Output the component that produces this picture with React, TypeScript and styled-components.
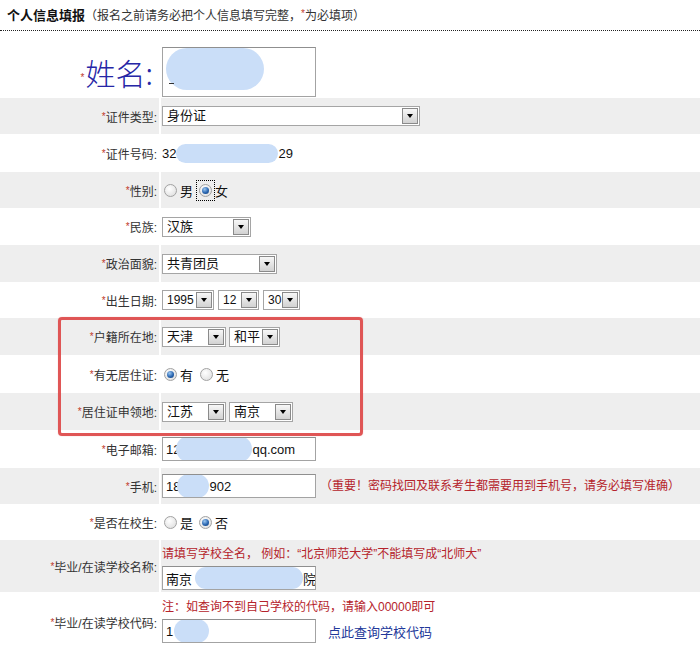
import React from "react";
import styled, { createGlobalStyle } from "styled-components";

const Global = createGlobalStyle`
  html, body { margin: 0; padding: 0; background: #fff; }
  body {
    font-family: "Liberation Sans", "Noto Sans CJK SC", sans-serif;
    font-size: 12px;
    color: #222;
  }
`;

const Page = styled.div`
  width: 700px;
  height: 647px;
  overflow: hidden;
  background: #fff;
`;

const Header = styled.div`
  height: 31px;
  box-sizing: border-box;
  padding: 5px 0 0 7px;
  border-bottom: 1px dotted #222;
  line-height: 18px;
  font-size: 12px;
  color: #333;
  white-space: nowrap;
`;

const HeaderTitle = styled.span`
  font-weight: bold;
  font-size: 13px;
  color: #111;
`;

const Star = styled.span`
  color: #c0392b;
  font-size: 10px;
  vertical-align: 3px;
`;

const Row = styled.div<{ $h: number; $alt?: boolean }>`
  display: grid;
  grid-template-columns: 159px 1fr;
  column-gap: 2px;
  height: ${(p) => p.$h}px;
  & > * {
    background: ${(p) => (p.$alt ? "#eeeeee" : "#fff")};
  }
`;

const LabelCell = styled.div<{ $top?: number }>`
  display: flex;
  justify-content: flex-end;
  align-items: center;
  padding-right: 2px;
  padding-top: ${(p) => p.$top ?? 0}px;
  font-size: 12px;
  color: #333;
  white-space: nowrap;
`;

const BigLabel = styled.span`
  font-family: "Noto Sans CJK SC", sans-serif;
  font-weight: 300;
  font-size: 30px;
  color: #2626a6;
  margin-right: 4px;
  line-height: 1;
`;

const BigStar = styled.span`
  color: #c0392b;
  font-size: 10px;
  align-self: center;
  margin-top: 12px;
  margin-right: 1px;
`;

const FieldCell = styled.div`
  display: flex;
  align-items: center;
  padding-left: 1px;
  font-size: 13px;
  color: #111;
  white-space: nowrap;
`;

const NameField = styled(FieldCell)`
  align-items: flex-end;
  padding-bottom: 1px;
`;

const StackField = styled.div<{ $top: number }>`
  display: flex;
  flex-direction: column;
  align-items: flex-start;
  padding: ${(p) => p.$top}px 0 0 1px;
  gap: 4px;
  white-space: nowrap;
`;

const InlineGroup = styled.div`
  display: flex;
  align-items: center;
`;

const Note = styled.span<{ $ml?: number }>`
  color: #b5232b;
  font-size: 12px;
  line-height: 16px;
  margin-left: ${(p) => p.$ml ?? 0}px;
`;

const Link = styled.span`
  color: #22389a;
  font-size: 13px;
  margin-left: 12px;
`;

const Plain = styled.span`
  font-size: 13px;
  color: #111;
`;

const Blur = styled.span<{ $w: number; $h: number; $ml?: number }>`
  display: inline-block;
  flex-shrink: 0;
  width: ${(p) => p.$w}px;
  height: ${(p) => p.$h}px;
  margin-left: ${(p) => p.$ml ?? 0}px;
  background: #cadef8;
  border-radius: 999px;
`;

const InputBox = styled.div<{ $h?: number; $top?: boolean }>`
  display: flex;
  align-items: ${(p) => (p.$top ? "flex-start" : "center")};
  box-sizing: border-box;
  width: 154px;
  height: ${(p) => p.$h ?? 24}px;
  border: 1px solid #a3a3a3;
  border-top-color: #8f8f8f;
  background: #fff;
  padding-left: 3px;
  font-size: 13px;
  color: #111;
  overflow: hidden;
  white-space: nowrap;
`;

const Caret = styled.span`
  position: relative;
  width: 0;
  height: 100%;
  &::before {
    content: "";
    position: absolute;
    left: 3px;
    bottom: 12px;
    width: 5px;
    height: 1px;
    background: #333;
  }
`;

const SelectBox = styled.div<{ $w: number; $num?: boolean; $gap?: number }>`
  display: inline-flex;
  align-items: center;
  box-sizing: border-box;
  width: ${(p) => p.$w}px;
  height: 20px;
  margin-left: ${(p) => p.$gap ?? 0}px;
  border: 1px solid #a5a5a5;
  background: #fff;
  padding: 1px;
  font-size: ${(p) => (p.$num ? 12 : 13)}px;
  color: #111;
`;

const SelectValue = styled.span`
  flex: 1;
  padding-left: 3px;
  line-height: 16px;
  white-space: nowrap;
  overflow: hidden;
`;

const SelectButton = styled.span`
  width: 16px;
  height: 16px;
  flex-shrink: 0;
  box-sizing: border-box;
  border: 1px solid #8a8a8a;
  background: linear-gradient(#f7f7f7, #d2d2d2);
  display: flex;
  align-items: center;
  justify-content: center;
  &::before {
    content: "";
    border-left: 3.5px solid transparent;
    border-right: 3.5px solid transparent;
    border-top: 4px solid #000;
  }
`;

const RadioDot = styled.span<{ $on?: boolean }>`
  width: 13px;
  height: 13px;
  border-radius: 50%;
  box-sizing: border-box;
  border: 1px solid #a2a2a2;
  background: radial-gradient(circle at 40% 35%, #ffffff, #dadada);
  display: inline-flex;
  align-items: center;
  justify-content: center;
  flex-shrink: 0;
  &::after {
    content: "";
    width: 7px;
    height: 7px;
    border-radius: 50%;
    background: radial-gradient(circle at 38% 32%, #9cc8f2, #2a66b0 55%, #0b3570);
    display: ${(p) => (p.$on ? "block" : "none")};
  }
`;

const RadioOption = styled.span<{ $gap?: number }>`
  display: inline-flex;
  align-items: center;
  margin-left: ${(p) => p.$gap ?? 3}px;
  font-size: 13px;
  color: #111;
`;

const Focus = styled.span<{ $focus?: boolean }>`
  display: inline-flex;
  align-items: center;
  padding: 3px 2px;
  outline: ${(p) => (p.$focus ? "1px dotted #000" : "none")};
  margin-right: 1px;
`;

const Highlight = styled.div`
  position: relative;
  &::after {
    content: "";
    position: absolute;
    left: 58px;
    width: 305px;
    top: -1px;
    bottom: -6px;
    box-sizing: border-box;
    border: 3px solid rgba(221, 72, 72, 0.92);
    border-radius: 4px;
    box-shadow: 0 0 1px rgba(221, 72, 72, 0.5);
    pointer-events: none;
  }
`;

const Label: React.FC<{ text: string }> = ({ text }) => (
  <LabelCell>
    <Star>*</Star>
    {text}:
  </LabelCell>
);

const Select: React.FC<{ w: number; value: string; num?: boolean; gap?: number }> = ({
  w,
  value,
  num,
  gap,
}) => (
  <SelectBox $w={w} $num={num} $gap={gap}>
    <SelectValue>{value}</SelectValue>
    <SelectButton />
  </SelectBox>
);

const Radio: React.FC<{ label: string; on?: boolean; gap?: number; focus?: boolean }> = ({
  label,
  on,
  gap,
  focus,
}) => (
  <RadioOption $gap={gap}>
    <Focus $focus={focus}>
      <RadioDot $on={on} />
    </Focus>
    {label}
  </RadioOption>
);

export default function App() {
  return (
    <Page>
      <Global />
      <Header>
        <HeaderTitle>个人信息填报</HeaderTitle>（报名之前请务必把个人信息填写完整，<Star>*</Star>为必填项）
      </Header>

      <Row $h={67}>
        <LabelCell $top={14}>
          <BigStar>*</BigStar>
          <BigLabel>姓名:</BigLabel>
        </LabelCell>
        <NameField>
          <InputBox $h={50} $top>
            <Caret />
            <Blur $w={98} $h={42} />
          </InputBox>
        </NameField>
      </Row>

      <Row $h={36} $alt>
        <Label text="证件类型" />
        <FieldCell>
          <Select w={258} value="身份证" />
        </FieldCell>
      </Row>

      <Row $h={38}>
        <Label text="证件号码" />
        <FieldCell>
          <Plain>32</Plain>
          <Blur $w={102} $h={19} />
          <Plain>29</Plain>
        </FieldCell>
      </Row>

      <Row $h={36} $alt>
        <Label text="性别" />
        <FieldCell>
          <Radio label="男" gap={0} />
          <Radio label="女" on focus gap={4} />
        </FieldCell>
      </Row>

      <Row $h={37}>
        <Label text="民族" />
        <FieldCell>
          <Select w={89} value="汉族" />
        </FieldCell>
      </Row>

      <Row $h={37} $alt>
        <Label text="政治面貌" />
        <FieldCell>
          <Select w={115} value="共青团员" />
        </FieldCell>
      </Row>

      <Row $h={36}>
        <Label text="出生日期" />
        <FieldCell>
          <Select w={52} value="1995" num />
          <Select w={41} value="12" num gap={4} />
          <Select w={37} value="30" num gap={4} />
        </FieldCell>
      </Row>

      <Highlight>
        <Row $h={37} $alt>
          <Label text="户籍所在地" />
          <FieldCell>
            <Select w={64} value="天津" />
            <Select w={51} value="和平" gap={3} />
          </FieldCell>
        </Row>
        <Row $h={38}>
          <Label text="有无居住证" />
          <FieldCell>
            <Radio label="有" on gap={0} />
            <Radio label="无" gap={5} />
          </FieldCell>
        </Row>
        <Row $h={37} $alt>
          <Label text="居住证申领地" />
          <FieldCell>
            <Select w={64} value="江苏" />
            <Select w={64} value="南京" gap={3} />
          </FieldCell>
        </Row>
      </Highlight>

      <Row $h={38}>
        <Label text="电子邮箱" />
        <FieldCell>
          <InputBox>
            <span>12</span>
            <Blur $w={76} $h={26} $ml={-4} />
            <span>qq.com</span>
          </InputBox>
        </FieldCell>
      </Row>

      <Row $h={36} $alt>
        <Label text="手机" />
        <FieldCell>
          <InputBox>
            <span>18</span>
            <Blur $w={32} $h={24} $ml={-3} />
            <span>902</span>
          </InputBox>
          <Note $ml={4}>（重要！密码找回及联系考生都需要用到手机号，请务必填写准确）</Note>
        </FieldCell>
      </Row>

      <Row $h={36}>
        <Label text="是否在校生" />
        <FieldCell>
          <Radio label="是" gap={0} />
          <Radio label="否" on gap={4} />
        </FieldCell>
      </Row>

      <Row $h={52} $alt>
        <Label text="毕业/在读学校名称" />
        <StackField $top={6}>
          <Note>请填写学校全名， 例如：“北京师范大学”不能填写成“北师大”</Note>
          <InputBox>
            <span>南京</span>
            <Blur $w={108} $h={22} $ml={3} />
            <span>院</span>
          </InputBox>
        </StackField>
      </Row>

      <Row $h={60}>
        <Label text="毕业/在读学校代码" />
        <StackField $top={7}>
          <Note>注：如查询不到自己学校的代码，请输入00000即可</Note>
          <InlineGroup>
            <InputBox>
              <span>1</span>
              <Blur $w={35} $h={24} $ml={1} />
            </InputBox>
            <Link>点此查询学校代码</Link>
          </InlineGroup>
        </StackField>
      </Row>
    </Page>
  );
}
